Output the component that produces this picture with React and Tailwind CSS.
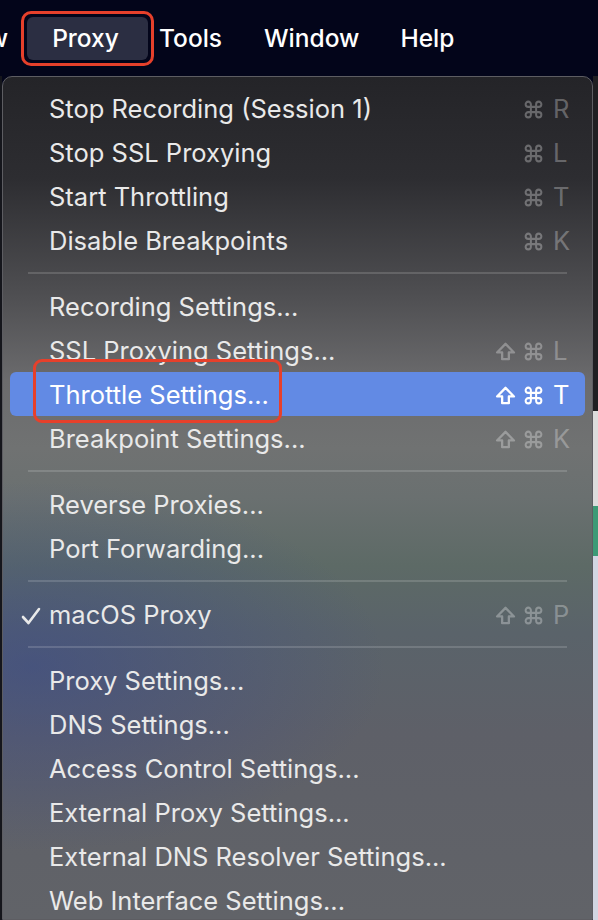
import React from 'react';

const CmdIcon = () => (
  <svg width="21" height="21" viewBox="0 0 24 24" fill="none" stroke="currentColor" strokeWidth="2.3" strokeLinecap="round" strokeLinejoin="round">
    <path d="M15 6v12a3 3 0 1 0 3-3H6a3 3 0 1 0 3 3V6a3 3 0 1 0-3 3h12a3 3 0 1 0-3-3" />
  </svg>
);

const ShiftIcon = () => (
  <svg width="23" height="23" viewBox="0 0 24 24" fill="none" stroke="currentColor" strokeWidth="2.4" strokeLinejoin="round">
    <path d="M8.5 20v-7H3.2L12 4l8.8 9h-5.3v7z" />
  </svg>
);

const Check = () => (
  <svg width="20" height="18" viewBox="0 0 20 18" fill="none" stroke="currentColor" strokeWidth="2.6" strokeLinecap="round" strokeLinejoin="round">
    <path d="M2 10l5.5 6L18 2" />
  </svg>
);

const sections = [
  [
    { label: 'Stop Recording (Session 1)', key: 'R' },
    { label: 'Stop SSL Proxying', key: 'L' },
    { label: 'Start Throttling', key: 'T' },
    { label: 'Disable Breakpoints', key: 'K' },
  ],
  [
    { label: 'Recording Settings...' },
    { label: 'SSL Proxying Settings...', key: 'L', shift: true },
    { label: 'Throttle Settings...', key: 'T', shift: true, active: true },
    { label: 'Breakpoint Settings...', key: 'K', shift: true },
  ],
  [{ label: 'Reverse Proxies...' }, { label: 'Port Forwarding...' }],
  [{ label: 'macOS Proxy', key: 'P', shift: true, checked: true }],
  [
    { label: 'Proxy Settings...' },
    { label: 'DNS Settings...' },
    { label: 'Access Control Settings...' },
    { label: 'External Proxy Settings...' },
    { label: 'External DNS Resolver Settings...' },
    { label: 'Web Interface Settings...' },
  ],
];

const MenuRow = ({ item }) => (
  <div
    className={`relative mx-[7px] h-[44px] shrink-0 rounded-[6px] flex items-center pl-[10px] pr-[17px] pt-[3px] ${
      item.active ? 'bg-[#628ae4] text-white' : 'text-[#e9e9e9]'
    }`}
  >
    <span className="w-[29px] flex items-center pl-[1px] text-[#e9e9e9]">{item.checked && <Check />}</span>
    <span className="flex-1 whitespace-nowrap">{item.label}</span>
    {item.key && (
      <span className={`flex items-center ${item.active ? 'text-white' : 'text-white/30'}`}>
        {item.shift && (
          <span className="mr-[6px] flex">
            <ShiftIcon />
          </span>
        )}
        <CmdIcon />
        <span className="ml-[9px] w-[15px]">{item.key}</span>
      </span>
    )}
    {item.active && (
      <div className="absolute left-[23px] top-[-13px] w-[249px] h-[64px] border-[3px] border-[#e6402b] rounded-[9px]" />
    )}
  </div>
);

export default function App() {
  return (
    <div
      className="w-[598px] h-[920px] overflow-hidden bg-[#03051a] flex flex-col"
      style={{ fontFamily: 'Inter, "Noto Sans", sans-serif' }}
    >
      {/* menu bar */}
      <div className="h-[76px] shrink-0 flex items-center text-white text-[24.5px] font-medium">
        <span className="w-[8px] overflow-hidden flex justify-end">w</span>
        <div className="relative ml-[19px] w-[121px] h-[43px] rounded-[6px] bg-[#2b2e42] flex items-center justify-center pr-[4px]">
          Proxy
          <div className="absolute -inset-[6px] border-[3px] border-[#e6402b] rounded-[10px]" />
        </div>
        <span className="ml-[11px]">Tools</span>
        <span className="ml-[42px]">Window</span>
        <span className="ml-[41px]">Help</span>
      </div>

      <div className="flex flex-1 min-h-0">
        <div className="w-[2px] bg-[#15161c]" />
        {/* dropdown */}
        <div className="relative w-[591px] rounded-t-[10px] border border-[#5d5d62] overflow-hidden bg-[linear-gradient(180deg,#242428_0%,#2d2d31_12%,#4f4f52_26%,#6b6b6d_36%,#707272_44%,#6a7070_50%,#5d6a66_58%,#5a636a_66%,#5e6068_78%,#616368_100%)]">
          <div className="absolute inset-0 bg-[radial-gradient(ellipse_60%_22%_at_5%_70%,rgba(55,72,140,0.55),transparent)]" />
          <div className="relative flex flex-col pt-[9px] text-[25.5px] font-normal">
            {sections.map((sec, i) => (
              <React.Fragment key={i}>
                {i > 0 && (
                  <div className="h-[22px] shrink-0 flex items-center">
                    <div className="mx-[25px] flex-1 h-[2px] bg-white/15" />
                  </div>
                )}
                {sec.map((item) => (
                  <MenuRow key={item.label} item={item} />
                ))}
              </React.Fragment>
            ))}
          </div>
        </div>
        {/* strip of the window behind */}
        <div className="flex-1 flex flex-col">
          <div className="h-[335px] bg-[#1f1f22]" />
          <div className="h-[95px] bg-[#dcdcdc]" />
          <div className="h-[50px] bg-[#3d9a76]" />
          <div className="flex-1 bg-[#d2d6e2]" />
        </div>
      </div>
    </div>
  );
}
